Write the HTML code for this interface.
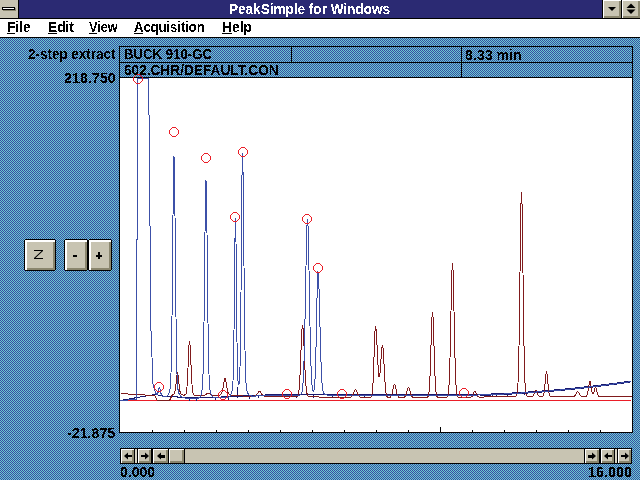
<!DOCTYPE html>
<html><head><meta charset="utf-8">
<style>
html,body{margin:0;padding:0;width:640px;height:480px;overflow:hidden;background:#5086bc;}
*{box-sizing:border-box;}
.abs{position:absolute;}
body{font-family:"Liberation Sans",sans-serif;font-weight:bold;font-size:13.5px;color:#000;position:relative;}
.t{position:absolute;white-space:nowrap;line-height:1;}
.u{text-decoration:underline;text-underline-offset:1px;text-decoration-thickness:1px;}
.t{font-size:14px;transform-origin:0 0;}
</style></head><body>
<svg class="abs" style="left:0;top:0" width="640" height="480" shape-rendering="crispEdges">
<defs><pattern id="chk" width="2" height="2" patternUnits="userSpaceOnUse">
<rect width="2" height="2" fill="#6acece"/><rect x="0" y="0" width="1" height="1" fill="#3a4aa4"/><rect x="1" y="1" width="1" height="1" fill="#3a4aa4"/>
</pattern></defs>
<rect x="0" y="38" width="640" height="442" fill="url(#chk)"/>
<!-- title bar -->
<rect x="0" y="0" width="640" height="18" fill="#2b2a73"/>
<rect x="0" y="18" width="640" height="1" fill="#000"/>
<rect x="0" y="19" width="640" height="18" fill="#fff"/>
<rect x="0" y="37" width="640" height="1" fill="#000"/>
<!-- system box -->
<rect x="0" y="0" width="18" height="18" fill="#c8c4b2"/>
<rect x="18" y="0" width="1" height="18" fill="#000"/>
<rect x="3" y="8" width="13" height="3" fill="#8a866e"/>
<rect x="2" y="7" width="13" height="3" fill="#000"/>
<rect x="3" y="8" width="11" height="1" fill="#fff"/>
<!-- min / max buttons -->
<rect x="602" y="0" width="1" height="18" fill="#000"/>
<rect x="603" y="0" width="18" height="18" fill="#fff"/>
<rect x="604" y="1" width="17" height="17" fill="#8a866e"/>
<rect x="604" y="1" width="15" height="15" fill="#c8c4b2"/>
<rect x="621" y="0" width="1" height="18" fill="#000"/>
<rect x="622" y="0" width="18" height="18" fill="#fff"/>
<rect x="623" y="1" width="17" height="17" fill="#8a866e"/>
<rect x="623" y="1" width="15" height="15" fill="#c8c4b2"/>
<polygon points="608,7 616,7 612,11" fill="#000" shape-rendering="auto"/>
<polygon points="631,3.5 635.5,8 626.5,8" fill="#000" shape-rendering="auto"/>
<polygon points="626.5,9.5 635.5,9.5 631,14" fill="#000" shape-rendering="auto"/>
<!-- header box -->
<rect x="119" y="46" width="514" height="1" fill="#000"/>
<rect x="119" y="62" width="514" height="1" fill="#000"/>
<rect x="119" y="77" width="514" height="1" fill="#000"/>
<rect x="119" y="46" width="1" height="387" fill="#000"/>
<rect x="632" y="46" width="1" height="387" fill="#000"/>
<rect x="291" y="46" width="1" height="17" fill="#000"/>
<rect x="461" y="46" width="1" height="32" fill="#000"/>
<!-- plot -->
<rect x="120" y="78" width="512" height="354" fill="#fff"/>
<rect x="119" y="432" width="514" height="1" fill="#000"/>
<rect x="152" y="430" width="1" height="2" fill="#000"/>
<rect x="184" y="430" width="1" height="2" fill="#000"/>
<rect x="216" y="430" width="1" height="2" fill="#000"/>
<rect x="248" y="430" width="1" height="2" fill="#000"/>
<rect x="280" y="430" width="1" height="2" fill="#000"/>
<rect x="312" y="430" width="1" height="2" fill="#000"/>
<rect x="344" y="430" width="1" height="2" fill="#000"/>
<rect x="376" y="430" width="1" height="2" fill="#000"/>
<rect x="408" y="430" width="1" height="2" fill="#000"/>
<rect x="440" y="427" width="1" height="5" fill="#000"/>
<rect x="472" y="430" width="1" height="2" fill="#000"/>
<rect x="504" y="430" width="1" height="2" fill="#000"/>
<rect x="536" y="430" width="1" height="2" fill="#000"/>
<rect x="568" y="430" width="1" height="2" fill="#000"/>
<rect x="600" y="430" width="1" height="2" fill="#000"/>
<!-- Z - + buttons -->
<rect x="25" y="239" width="30" height="1" fill="#000"/>
<rect x="25" y="270" width="30" height="1" fill="#000"/>
<rect x="24" y="240" width="1" height="30" fill="#000"/>
<rect x="55" y="240" width="1" height="30" fill="#000"/>
<rect x="25" y="240" width="30" height="30" fill="#fff"/>
<rect x="27" y="242" width="28" height="28" fill="#8a866e"/>
<rect x="27" y="242" width="26" height="26" fill="#c8c4b2"/>
<rect x="65" y="239" width="22" height="1" fill="#000"/>
<rect x="65" y="270" width="22" height="1" fill="#000"/>
<rect x="64" y="240" width="1" height="30" fill="#000"/>
<rect x="87" y="240" width="1" height="30" fill="#000"/>
<rect x="65" y="240" width="22" height="30" fill="#fff"/>
<rect x="67" y="242" width="20" height="28" fill="#8a866e"/>
<rect x="67" y="242" width="18" height="26" fill="#c8c4b2"/>
<rect x="89" y="239" width="22" height="1" fill="#000"/>
<rect x="89" y="270" width="22" height="1" fill="#000"/>
<rect x="88" y="240" width="1" height="30" fill="#000"/>
<rect x="111" y="240" width="1" height="30" fill="#000"/>
<rect x="89" y="240" width="22" height="30" fill="#fff"/>
<rect x="91" y="242" width="20" height="28" fill="#8a866e"/>
<rect x="91" y="242" width="18" height="26" fill="#c8c4b2"/>
<polygon points="34,250 43,250 43,251 35.5,258 43,258 43,259 34,259 34,258 41.5,251 34,251" fill="#000" shape-rendering="auto"/>
<rect x="73" y="255" width="4" height="2" fill="#000"/>
<rect x="96" y="255" width="6" height="2" fill="#000"/><rect x="98" y="252" width="2" height="7" fill="#000"/>
<!-- scrollbar -->
<rect x="120" y="448" width="512" height="16" fill="#000"/>
<rect x="185" y="449" width="399" height="14" fill="#c8c4b2"/>
<rect x="135" y="449" width="2" height="14" fill="#d8d4c4"/>
<rect x="615" y="449" width="2" height="14" fill="#d8d4c4"/>
<rect x="121" y="449" width="13" height="14" fill="#fff"/><rect x="122" y="450" width="12" height="13" fill="#8a866e"/><rect x="122" y="450" width="10" height="11" fill="#c8c4b2"/>
<rect x="138" y="449" width="13" height="14" fill="#fff"/><rect x="139" y="450" width="12" height="13" fill="#8a866e"/><rect x="139" y="450" width="10" height="11" fill="#c8c4b2"/>
<rect x="153" y="449" width="15" height="14" fill="#fff"/><rect x="154" y="450" width="14" height="13" fill="#8a866e"/><rect x="154" y="450" width="12" height="11" fill="#c8c4b2"/>
<rect x="169" y="449" width="15" height="14" fill="#fff"/><rect x="170" y="450" width="14" height="13" fill="#8a866e"/><rect x="170" y="450" width="12" height="11" fill="#c8c4b2"/>
<rect x="585" y="449" width="14" height="14" fill="#fff"/><rect x="586" y="450" width="13" height="13" fill="#8a866e"/><rect x="586" y="450" width="11" height="11" fill="#c8c4b2"/>
<rect x="601" y="449" width="13" height="14" fill="#fff"/><rect x="602" y="450" width="12" height="13" fill="#8a866e"/><rect x="602" y="450" width="10" height="11" fill="#c8c4b2"/>
<rect x="618" y="449" width="13" height="14" fill="#fff"/><rect x="619" y="450" width="12" height="13" fill="#8a866e"/><rect x="619" y="450" width="10" height="11" fill="#c8c4b2"/>
<polygon points="124,456 128,452.5 128,459.5" fill="#000" shape-rendering="auto"/><rect x="127" y="455" width="5" height="2" fill="#000"/>
<polygon points="149,456 145,452.5 145,459.5" fill="#000" shape-rendering="auto"/><rect x="141" y="455" width="5" height="2" fill="#000"/>
<polygon points="157,456 161,452.5 161,459.5" fill="#000" shape-rendering="auto"/><rect x="160" y="455" width="5" height="3" fill="#000"/>
<polygon points="596,456 592,452.5 592,459.5" fill="#000" shape-rendering="auto"/><rect x="588" y="455" width="5" height="3" fill="#000"/>
<polygon points="604,456 608,452.5 608,459.5" fill="#000" shape-rendering="auto"/><rect x="607" y="455" width="5" height="2" fill="#000"/>
<polygon points="629,456 625,452.5 625,459.5" fill="#000" shape-rendering="auto"/><rect x="621" y="455" width="5" height="2" fill="#000"/>
</svg>
<svg class="abs" style="left:0;top:0" width="640" height="480">
<defs><clipPath id="pc"><rect x="120" y="78" width="512" height="354"/></clipPath></defs>
<g clip-path="url(#pc)" fill="none" stroke-width="1" stroke-linejoin="miter" shape-rendering="crispEdges">
<path d="M120 400.5 H631" stroke="#eb1e28" shape-rendering="crispEdges"/>
<path d="M120 400.50 L125 399.64 L130 398.79 L135 397.93 L140 397.07 L145 396.21 L150 395.36 L155 394.50 L160 395.41 L165 396.32 L170 396.68 L175 396.90 L180 397.12 L185 397.34 L190 397.56 L195 397.78 L200 398.00 L205 397.77 L210 397.53 L215 397.30 L220 397.06 L225 396.83 L230 396.59 L235 396.36 L240 396.14 L245 395.91 L250 395.68 L255 395.45 L260 395.23 L265 395.00 L270 394.97 L275 394.94 L280 394.91 L285 394.88 L290 394.85 L295 394.82 L300 394.79 L305 394.76 L310 394.74 L315 394.71 L320 394.68 L325 394.65 L330 394.62 L335 394.59 L340 394.56 L345 394.53 L350 394.50 L355 394.53 L360 394.56 L365 394.58 L370 394.61 L375 394.64 L380 394.67 L385 394.69 L390 394.72 L395 394.75 L400 394.78 L405 394.81 L410 394.83 L415 394.86 L420 394.89 L425 394.92 L430 394.94 L435 394.97 L440 395.00 L450 394.96 L460 394.85 L470 394.65 L480 394.39 L490 394.04 L500 393.62 L510 393.12 L520 392.54 L530 391.89 L540 391.16 L550 390.35 L560 389.47 L570 388.51 L580 387.47 L590 386.36 L600 385.17 L610 383.90 L620 382.56 L630 381.14" stroke="#1a1a6e"/>
<path d="M480 395.39 L490 395.04 L500 394.62 L510 394.12 L520 393.54 L530 392.89 L540 392.16 L550 391.35 L560 390.47 L570 389.51 L580 388.47 L590 387.36 L600 386.17 L610 384.90 L620 383.56 L630 382.14" stroke="#1a1a6e"/>
<path d="M189.5 397.0 V400.5" stroke="#1a1a6e"/><path d="M196.5 397.3 V400.8" stroke="#1a1a6e"/><path d="M215.5 396.8 V400.3" stroke="#1a1a6e"/><path d="M228.5 396.2 V399.7" stroke="#1a1a6e"/><path d="M249.5 395.2 V398.7" stroke="#1a1a6e"/><path d="M258.5 394.8 V398.3" stroke="#1a1a6e"/><path d="M296.5 394.3 V397.8" stroke="#1a1a6e"/><path d="M313.5 394.2 V397.7" stroke="#1a1a6e"/><path d="M332.5 394.1 V397.6" stroke="#1a1a6e"/><path d="M364.5 394.1 V397.6" stroke="#1a1a6e"/><path d="M492.5 393.5 V397.0" stroke="#1a1a6e"/><path d="M496.5 393.3 V396.8" stroke="#1a1a6e"/><path d="M507.5 392.8 V396.3" stroke="#1a1a6e"/><path d="M524.5 391.8 V395.3" stroke="#1a1a6e"/><path d="M237.5 387 V398" stroke="#1a1a6e"/>
<path d="M120.5 393.5 L121.0 393.5 L121.5 393.6 L122.0 393.6 L122.5 393.6 L123.0 393.7 L123.5 393.7 L124.0 393.7 L124.5 393.8 L125.0 393.8 L125.5 393.8 L126.0 393.8 L126.5 393.9 L127.0 393.9 L127.5 393.9 L128.0 394.0 L128.5 394.0 L129.0 394.0 L129.5 394.1 L130.0 394.1 L130.5 394.1 L131.0 394.2 L131.5 394.2 L132.0 394.2 L132.5 394.2 L133.0 394.3 L133.5 394.3 L134.0 394.3 L134.5 394.4 L135.0 394.4 L135.5 394.4 L136.0 394.5 L136.5 394.5 L137.0 394.5 L137.5 394.6 L138.0 394.6 L138.5 394.6 L139.0 394.6 L139.5 394.7 L140.0 394.7 L140.5 394.7 L141.0 394.8 L141.5 394.8 L142.0 394.8 L142.5 394.8 L143.0 394.9 L143.5 394.9 L144.0 394.9 L144.5 394.9 L145.0 395.0 L145.5 395.0 L146.0 395.0 L146.5 395.1 L147.0 395.1 L147.5 395.1 L148.0 395.1 L148.5 395.2 L149.0 395.2 L149.5 395.2 L150.0 395.2 L150.5 395.3 L151.0 395.3 L151.5 395.3 L152.0 395.4 L152.5 395.4 L153.0 395.4 L153.5 395.4 L154.0 395.5 L154.5 395.5 L155.0 396.3 L155.5 397.2 L156.0 398.0 L156.5 398.8 L157.0 399.7 L157.5 400.5 L158.0 400.5 L158.5 400.5 L159.0 400.5 L159.5 400.5 L160.0 400.5 L160.5 400.5 L161.0 400.5 L161.5 400.5 L162.0 400.5 L162.5 400.5 L163.0 400.5 L163.5 400.5 L164.0 400.5 L164.5 400.5 L165.0 400.5 L165.5 400.5 L166.0 400.5 L166.5 400.5 L167.0 400.5 L167.5 400.5 L168.0 400.5 L168.5 400.5 L169.0 400.5 L169.5 400.5 L170.0 399.5 L170.5 398.5 L171.0 397.5 L171.5 396.5 L172.0 395.5 L172.5 394.5 L173.0 394.5 L173.5 394.4 L174.0 394.0 L174.5 393.1 L175.0 391.3 L175.5 388.1 L176.0 383.7 L176.5 378.9 L177.0 375.0 L177.5 373.5 L178.0 375.0 L178.5 379.0 L179.0 383.9 L179.5 388.3 L180.0 391.5 L180.5 393.4 L181.0 394.3 L181.5 394.7 L182.0 394.9 L182.5 394.9 L183.0 395.0 L183.5 395.0 L184.0 395.0 L184.5 395.0 L185.0 394.9 L185.5 394.6 L186.0 393.7 L186.5 391.4 L187.0 386.7 L187.5 378.7 L188.0 367.6 L188.5 355.2 L189.0 345.3 L189.5 341.5 L190.0 344.8 L190.5 353.6 L191.0 365.0 L191.5 376.0 L192.0 384.4 L192.5 390.0 L193.0 393.0 L193.5 394.5 L194.0 395.1 L194.5 395.4 L195.0 395.5 L195.5 395.5 L196.0 395.5 L196.5 395.5 L197.0 395.5 L197.5 395.5 L198.0 395.5 L198.5 395.5 L199.0 395.5 L199.5 395.5 L200.0 395.5 L200.5 395.5 L201.0 395.6 L201.5 395.6 L202.0 395.6 L202.5 395.6 L203.0 395.5 L203.5 395.5 L204.0 395.4 L204.5 395.3 L205.0 395.1 L205.5 394.7 L206.0 394.3 L206.5 393.9 L207.0 393.6 L207.5 393.5 L208.0 393.5 L208.5 393.6 L209.0 393.8 L209.5 393.9 L210.0 394.1 L210.5 394.4 L211.0 394.6 L211.5 394.8 L212.0 395.0 L212.5 395.1 L213.0 395.3 L213.5 395.4 L214.0 395.5 L214.5 395.5 L215.0 395.6 L215.5 395.6 L216.0 395.6 L216.5 395.7 L217.0 395.7 L217.5 395.6 L218.0 395.6 L218.5 395.5 L219.0 395.4 L219.5 395.3 L220.0 395.0 L220.5 394.7 L221.0 394.2 L221.5 393.5 L222.0 392.4 L222.5 390.7 L223.0 388.3 L223.5 385.2 L224.0 382.0 L224.5 379.5 L225.0 378.5 L225.5 379.5 L226.0 382.0 L226.5 385.2 L227.0 388.3 L227.5 390.8 L228.0 392.4 L228.5 393.5 L229.0 394.3 L229.5 394.8 L230.0 395.1 L230.5 395.4 L231.0 395.5 L231.5 395.7 L232.0 395.7 L232.5 395.8 L233.0 395.8 L233.5 395.8 L234.0 395.9 L234.5 395.9 L235.0 395.9 L235.5 395.9 L236.0 395.9 L236.5 395.9 L237.0 395.9 L237.5 395.9 L238.0 395.9 L238.5 395.9 L239.0 395.9 L239.5 395.9 L240.0 395.9 L240.5 395.9 L241.0 395.9 L241.5 395.9 L242.0 395.9 L242.5 395.9 L243.0 396.0 L243.5 396.0 L244.0 396.0 L244.5 396.0 L245.0 396.0 L245.5 396.0 L246.0 396.0 L246.5 396.0 L247.0 396.0 L247.5 396.0 L248.0 396.0 L248.5 396.0 L249.0 396.0 L249.5 396.0 L250.0 396.0 L250.5 396.0 L251.0 396.0 L251.5 396.0 L252.0 396.0 L252.5 396.0 L253.0 396.0 L253.5 396.0 L254.0 396.0 L254.5 396.0 L255.0 395.9 L255.5 395.7 L256.0 395.4 L256.5 394.9 L257.0 394.3 L257.5 393.6 L258.0 392.8 L258.5 392.1 L259.0 391.7 L259.5 391.5 L260.0 391.7 L260.5 392.2 L261.0 392.9 L261.5 393.6 L262.0 394.4 L262.5 395.0 L263.0 395.4 L263.5 395.8 L264.0 395.9 L264.5 396.1 L265.0 396.1 L265.5 396.1 L266.0 396.2 L266.5 396.2 L267.0 396.2 L267.5 396.2 L268.0 396.2 L268.5 396.2 L269.0 396.2 L269.5 396.2 L270.0 396.2 L270.5 396.2 L271.0 396.2 L271.5 396.2 L272.0 396.2 L272.5 396.2 L273.0 396.2 L273.5 396.2 L274.0 396.2 L274.5 396.3 L275.0 396.3 L275.5 396.3 L276.0 396.3 L276.5 396.3 L277.0 396.3 L277.5 396.3 L278.0 396.3 L278.5 396.3 L279.0 396.3 L279.5 396.3 L280.0 396.3 L280.5 396.3 L281.0 396.3 L281.5 396.3 L282.0 396.3 L282.5 396.3 L283.0 396.3 L283.5 396.3 L284.0 396.3 L284.5 396.3 L285.0 396.4 L285.5 396.4 L286.0 396.4 L286.5 396.4 L287.0 396.4 L287.5 396.4 L288.0 396.4 L288.5 396.4 L289.0 396.4 L289.5 396.4 L290.0 396.4 L290.5 396.4 L291.0 396.4 L291.5 396.4 L292.0 396.4 L292.5 396.4 L293.0 396.4 L293.5 396.4 L294.0 396.4 L294.5 396.4 L295.0 396.4 L295.5 396.4 L296.0 396.4 L296.5 396.4 L297.0 396.3 L297.5 395.9 L298.0 395.1 L298.5 393.4 L299.0 390.0 L299.5 384.2 L300.0 375.5 L300.5 364.0 L301.0 350.7 L301.5 338.1 L302.0 328.9 L302.5 325.5 L303.0 328.2 L303.5 335.7 L304.0 346.4 L304.5 358.3 L305.0 369.5 L305.5 378.9 L306.0 385.9 L306.5 390.6 L307.0 393.5 L307.5 395.2 L308.0 396.0 L308.5 396.4 L309.0 396.6 L309.5 396.7 L310.0 396.7 L310.5 396.7 L311.0 396.8 L311.5 396.8 L312.0 396.8 L312.5 396.8 L313.0 396.8 L313.5 396.8 L314.0 396.8 L314.5 396.9 L315.0 396.9 L315.5 396.9 L316.0 396.9 L316.5 396.9 L317.0 396.9 L317.5 396.9 L318.0 396.9 L318.5 396.9 L319.0 397.0 L319.5 397.0 L320.0 397.0 L320.5 397.0 L321.0 397.0 L321.5 397.0 L322.0 397.0 L322.5 397.1 L323.0 397.1 L323.5 397.1 L324.0 397.1 L324.5 397.1 L325.0 397.1 L325.5 397.1 L326.0 397.1 L326.5 397.1 L327.0 397.2 L327.5 397.2 L328.0 397.2 L328.5 397.2 L329.0 397.2 L329.5 397.2 L330.0 397.2 L330.5 397.2 L331.0 397.3 L331.5 397.3 L332.0 397.3 L332.5 397.3 L333.0 397.3 L333.5 397.3 L334.0 397.3 L334.5 397.4 L335.0 397.4 L335.5 397.4 L336.0 397.4 L336.5 397.4 L337.0 397.4 L337.5 397.4 L338.0 397.4 L338.5 397.4 L339.0 397.5 L339.5 397.5 L340.0 397.5 L340.5 397.5 L341.0 397.5 L341.5 397.5 L342.0 397.5 L342.5 397.5 L343.0 397.5 L343.5 397.5 L344.0 397.5 L344.5 397.5 L345.0 397.5 L345.5 397.5 L346.0 397.5 L346.5 397.5 L347.0 397.5 L347.5 397.5 L348.0 397.5 L348.5 397.5 L349.0 397.5 L349.5 397.5 L350.0 397.4 L350.5 397.3 L351.0 397.1 L351.5 396.8 L352.0 396.3 L352.5 395.5 L353.0 394.5 L353.5 393.2 L354.0 391.8 L354.5 390.6 L355.0 389.8 L355.5 389.5 L356.0 389.8 L356.5 390.6 L357.0 391.8 L357.5 393.2 L358.0 394.5 L358.5 395.5 L359.0 396.3 L359.5 396.8 L360.0 397.1 L360.5 397.3 L361.0 397.4 L361.5 397.5 L362.0 397.5 L362.5 397.5 L363.0 397.5 L363.5 397.5 L364.0 397.5 L364.5 397.5 L365.0 397.5 L365.5 397.5 L366.0 397.5 L366.5 397.5 L367.0 397.5 L367.5 397.5 L368.0 397.5 L368.5 397.5 L369.0 397.5 L369.5 397.5 L370.0 397.5 L370.5 397.4 L371.0 397.1 L371.5 396.3 L372.0 394.4 L372.5 390.4 L373.0 383.1 L373.5 371.9 L374.0 357.5 L374.5 342.5 L375.0 330.9 L375.5 326.5 L376.0 328.8 L376.5 335.5 L377.0 345.0 L377.5 355.6 L378.0 365.3 L378.5 372.7 L379.0 376.6 L379.5 376.8 L380.0 373.4 L380.5 367.2 L381.0 359.7 L381.5 352.5 L382.0 347.3 L382.5 345.4 L383.0 347.9 L383.5 354.7 L384.0 364.0 L384.5 373.7 L385.0 382.2 L385.5 388.5 L386.0 392.7 L386.5 395.2 L387.0 396.5 L387.5 397.1 L388.0 397.4 L388.5 397.4 L389.0 397.5 L389.5 397.4 L390.0 397.3 L390.5 396.9 L391.0 396.3 L391.5 395.3 L392.0 393.7 L392.5 391.5 L393.0 389.1 L393.5 386.8 L394.0 385.1 L394.5 384.5 L395.0 385.1 L395.5 386.8 L396.0 389.1 L396.5 391.5 L397.0 393.7 L397.5 395.3 L398.0 396.3 L398.5 396.9 L399.0 397.3 L399.5 397.4 L400.0 397.5 L400.5 397.5 L401.0 397.5 L401.5 397.5 L402.0 397.5 L402.5 397.5 L403.0 397.5 L403.5 397.4 L404.0 397.3 L404.5 397.1 L405.0 396.6 L405.5 395.8 L406.0 394.5 L406.5 392.9 L407.0 391.1 L407.5 389.3 L408.0 388.0 L408.5 387.5 L409.0 388.0 L409.5 389.3 L410.0 391.1 L410.5 392.9 L411.0 394.5 L411.5 395.8 L412.0 396.6 L412.5 397.1 L413.0 397.3 L413.5 397.4 L414.0 397.5 L414.5 397.5 L415.0 397.5 L415.5 397.5 L416.0 397.5 L416.5 397.5 L417.0 397.5 L417.5 397.5 L418.0 397.5 L418.5 397.5 L419.0 397.5 L419.5 397.5 L420.0 397.5 L420.5 397.5 L421.0 397.5 L421.5 397.5 L422.0 397.5 L422.5 397.5 L423.0 397.5 L423.5 397.5 L424.0 397.5 L424.5 397.5 L425.0 397.5 L425.5 397.5 L426.0 397.4 L426.5 397.4 L427.0 397.3 L427.5 397.1 L428.0 396.5 L428.5 395.0 L429.0 391.8 L429.5 385.9 L430.0 376.3 L430.5 362.5 L431.0 345.9 L431.5 329.4 L432.0 317.1 L432.5 312.5 L433.0 317.1 L433.5 329.4 L434.0 345.9 L434.5 362.5 L435.0 376.2 L435.5 385.9 L436.0 391.8 L436.5 394.9 L437.0 396.4 L437.5 397.0 L438.0 397.3 L438.5 397.3 L439.0 397.3 L439.5 397.3 L440.0 397.3 L440.5 397.3 L441.0 397.3 L441.5 397.3 L442.0 397.3 L442.5 397.3 L443.0 397.3 L443.5 397.3 L444.0 397.3 L444.5 397.3 L445.0 397.3 L445.5 397.3 L446.0 397.3 L446.5 397.2 L447.0 396.9 L447.5 396.3 L448.0 394.7 L448.5 391.4 L449.0 385.0 L449.5 374.2 L450.0 357.8 L450.5 336.0 L451.0 311.1 L451.5 287.2 L452.0 269.9 L452.5 263.5 L453.0 269.9 L453.5 287.2 L454.0 311.0 L454.5 336.0 L455.0 357.8 L455.5 374.1 L456.0 385.0 L456.5 391.3 L457.0 394.6 L457.5 396.2 L458.0 396.8 L458.5 397.1 L459.0 397.1 L459.5 397.2 L460.0 397.2 L460.5 397.2 L461.0 397.2 L461.5 397.2 L462.0 397.2 L462.5 397.1 L463.0 397.1 L463.5 397.1 L464.0 397.1 L464.5 397.1 L465.0 397.1 L465.5 397.1 L466.0 397.1 L466.5 397.1 L467.0 397.1 L467.5 397.1 L468.0 397.1 L468.5 397.1 L469.0 397.1 L469.5 397.1 L470.0 397.1 L470.5 397.1 L471.0 397.0 L471.5 396.8 L472.0 396.5 L472.5 395.8 L473.0 394.8 L473.5 393.5 L474.0 392.2 L474.5 391.4 L475.0 391.3 L475.5 392.0 L476.0 393.2 L476.5 394.5 L477.0 395.6 L477.5 396.3 L478.0 396.7 L478.5 396.9 L479.0 397.0 L479.5 397.0 L480.0 397.0 L480.5 397.0 L481.0 397.0 L481.5 397.0 L482.0 397.0 L482.5 397.0 L483.0 397.0 L483.5 397.0 L484.0 397.0 L484.5 396.9 L485.0 396.9 L485.5 396.9 L486.0 396.9 L486.5 396.9 L487.0 396.9 L487.5 396.9 L488.0 396.9 L488.5 396.9 L489.0 396.9 L489.5 396.9 L490.0 396.9 L490.5 396.9 L491.0 396.9 L491.5 396.9 L492.0 396.9 L492.5 396.9 L493.0 396.8 L493.5 396.8 L494.0 396.8 L494.5 396.8 L495.0 396.8 L495.5 396.8 L496.0 396.8 L496.5 396.8 L497.0 396.8 L497.5 396.8 L498.0 396.8 L498.5 396.8 L499.0 396.8 L499.5 396.8 L500.0 396.8 L500.5 396.8 L501.0 396.7 L501.5 396.7 L502.0 396.7 L502.5 396.7 L503.0 396.7 L503.5 396.7 L504.0 396.7 L504.5 396.7 L505.0 396.7 L505.5 396.7 L506.0 396.7 L506.5 396.7 L507.0 396.7 L507.5 396.7 L508.0 396.7 L508.5 396.6 L509.0 396.6 L509.5 396.6 L510.0 396.6 L510.5 396.6 L511.0 396.6 L511.5 396.6 L512.0 396.6 L512.5 396.6 L513.0 396.6 L513.5 396.6 L514.0 396.6 L514.5 396.6 L515.0 396.6 L515.5 396.5 L516.0 396.3 L516.5 395.8 L517.0 394.3 L517.5 390.7 L518.0 383.1 L518.5 368.9 L519.0 345.7 L519.5 312.6 L520.0 272.8 L520.5 233.1 L521.0 203.5 L521.5 192.5 L522.0 203.5 L522.5 233.1 L523.0 272.8 L523.5 312.6 L524.0 345.6 L524.5 368.9 L525.0 383.1 L525.5 390.7 L526.0 394.2 L526.5 395.7 L527.0 396.3 L527.5 396.4 L528.0 396.5 L528.5 396.5 L529.0 396.5 L529.5 396.5 L530.0 396.5 L530.5 396.5 L531.0 396.5 L531.5 396.5 L532.0 396.4 L532.5 396.3 L533.0 396.0 L533.5 395.3 L534.0 394.2 L534.5 392.8 L535.0 391.3 L535.5 390.2 L536.0 389.9 L536.5 390.6 L537.0 391.9 L537.5 393.4 L538.0 394.7 L538.5 395.6 L539.0 396.1 L539.5 396.4 L540.0 396.5 L540.5 396.5 L541.0 396.5 L541.5 396.5 L542.0 396.4 L542.5 396.3 L543.0 395.9 L543.5 394.8 L544.0 392.7 L544.5 389.2 L545.0 384.2 L545.5 378.6 L546.0 374.2 L546.5 372.5 L547.0 374.2 L547.5 378.6 L548.0 384.2 L548.5 389.2 L549.0 392.7 L549.5 394.8 L550.0 395.9 L550.5 396.3 L551.0 396.4 L551.5 396.5 L552.0 396.5 L552.5 396.5 L553.0 396.5 L553.5 396.5 L554.0 396.5 L554.5 396.5 L555.0 396.5 L555.5 396.5 L556.0 396.5 L556.5 396.5 L557.0 396.5 L557.5 396.5 L558.0 396.5 L558.5 396.5 L559.0 396.5 L559.5 396.5 L560.0 396.5 L560.5 396.5 L561.0 396.5 L561.5 396.5 L562.0 396.5 L562.5 396.5 L563.0 396.5 L563.5 396.5 L564.0 396.5 L564.5 396.5 L565.0 396.5 L565.5 396.5 L566.0 396.5 L566.5 396.5 L567.0 396.5 L567.5 396.5 L568.0 396.5 L568.5 396.5 L569.0 396.5 L569.5 396.5 L570.0 396.5 L570.5 396.5 L571.0 396.5 L571.5 396.5 L572.0 396.5 L572.5 396.5 L573.0 396.5 L573.5 396.4 L574.0 396.3 L574.5 396.0 L575.0 395.6 L575.5 394.9 L576.0 394.0 L576.5 393.1 L577.0 392.3 L577.5 391.8 L578.0 391.9 L578.5 392.4 L579.0 393.3 L579.5 394.2 L580.0 395.0 L580.5 395.7 L581.0 396.1 L581.5 396.3 L582.0 396.4 L582.5 396.5 L583.0 396.5 L583.5 396.5 L584.0 396.5 L584.5 396.5 L585.0 396.5 L585.5 396.5 L586.0 396.3 L586.5 396.0 L587.0 395.3 L587.5 393.8 L588.0 391.3 L588.5 388.1 L589.0 384.7 L589.5 382.2 L590.0 381.5 L590.5 383.0 L591.0 386.0 L591.5 389.4 L592.0 392.2 L592.5 393.8 L593.0 394.2 L593.5 393.4 L594.0 391.8 L594.5 389.8 L595.0 388.1 L595.5 387.5 L596.0 388.1 L596.5 389.8 L597.0 391.9 L597.5 393.7 L598.0 395.1 L598.5 395.9 L599.0 396.3 L599.5 396.4 L600.0 396.5 L600.5 396.5 L601.0 396.5 L601.5 396.5 L602.0 396.5 L602.5 396.5 L603.0 396.5 L603.5 396.5 L604.0 396.5 L604.5 396.5 L605.0 396.5 L605.5 396.5 L606.0 396.5 L606.5 396.5 L607.0 396.5 L607.5 396.5 L608.0 396.5 L608.5 396.5 L609.0 396.5 L609.5 396.5 L610.0 396.5 L610.5 396.5 L611.0 396.5 L611.5 396.5 L612.0 396.5 L612.5 396.5 L613.0 396.5 L613.5 396.5 L614.0 396.5 L614.5 396.5 L615.0 396.5 L615.5 396.5 L616.0 396.5 L616.5 396.5 L617.0 396.5 L617.5 396.5 L618.0 396.5 L618.5 396.5 L619.0 396.5 L619.5 396.5 L620.0 396.5 L620.5 396.5 L621.0 396.5 L621.5 396.5 L622.0 396.5 L622.5 396.5 L623.0 396.5 L623.5 396.5 L624.0 396.5 L624.5 396.5 L625.0 396.5 L625.5 396.5 L626.0 396.5 L626.5 396.5 L627.0 396.5 L627.5 396.5 L628.0 396.5 L628.5 396.5 L629.0 396.5 L629.5 396.5 L630.0 396.5 L630.5 396.5 L631.0 396.5 L631.5 396.5" stroke="#801a1c"/>
<path d="M120.5 400.5 L136.5 399.5 L136.5 239.5 L137.5 239.5 L137.5 78.5 L148.5 78.5 L148.5 114.5 L149.5 115.5 L149.5 225.5 L150.5 226.5 L150.5 330.5 L151.5 331.5 L152.5 382.5 L155.5 392.5 L156.5 394.7 L157.0 394.6 L157.5 394.0 L158.0 392.6 L158.5 390.4 L159.0 388.3 L159.5 387.5 L160.0 388.6 L160.5 390.9 L161.0 393.4 L161.5 395.0 L162.0 395.9 L162.5 396.3 L163.0 396.4 L163.5 396.5 L164.0 396.6 L164.5 396.7 L165.0 396.6 L165.5 396.6 L166.0 396.5 L166.5 396.3 L167.0 395.9 L167.5 395.4 L168.0 394.8 L168.5 394.0 L169.0 393.1 L169.5 391.7 L170.0 389.3 L170.5 384.2 L171.0 373.3 L171.5 352.2 L172.0 317.2 L172.5 268.9 L173.0 215.6 L173.5 172.9 L174.0 156.5 L174.5 173.0 L175.0 215.7 L175.5 269.0 L176.0 317.4 L176.5 352.4 L177.0 373.5 L177.5 384.4 L178.0 389.5 L178.5 392.0 L179.0 393.4 L179.5 394.3 L180.0 395.1 L180.5 395.8 L181.0 396.3 L181.5 396.7 L182.0 397.1 L182.5 397.3 L183.0 397.5 L183.5 397.7 L184.0 397.8 L184.5 397.9 L185.0 398.0 L185.5 398.0 L186.0 398.0 L186.5 398.1 L187.0 398.1 L187.5 398.1 L188.0 398.1 L188.5 398.1 L189.0 398.2 L189.5 398.2 L190.0 398.2 L190.5 398.2 L191.0 398.2 L191.5 398.2 L192.0 398.2 L192.5 398.3 L193.0 398.3 L193.5 398.3 L194.0 398.3 L194.5 398.3 L195.0 398.3 L195.5 398.3 L196.0 398.3 L196.5 398.3 L197.0 398.3 L197.5 398.2 L198.0 398.1 L198.5 398.0 L199.0 397.7 L199.5 397.3 L200.0 396.7 L200.5 395.9 L201.0 394.8 L201.5 393.2 L202.0 390.4 L202.5 385.1 L203.0 374.6 L203.5 355.1 L204.0 323.5 L204.5 280.3 L205.0 232.9 L205.5 195.1 L206.0 180.5 L206.5 195.0 L207.0 232.8 L207.5 280.1 L208.0 323.3 L208.5 354.9 L209.0 374.3 L209.5 384.8 L210.0 390.0 L210.5 392.7 L211.0 394.3 L211.5 395.4 L212.0 396.2 L212.5 396.8 L213.0 397.1 L213.5 397.4 L214.0 397.6 L214.5 397.7 L215.0 397.7 L215.5 397.7 L216.0 397.7 L216.5 397.7 L217.0 397.7 L217.5 397.7 L218.0 397.7 L218.5 397.7 L219.0 397.6 L219.5 397.6 L220.0 397.6 L220.5 397.6 L221.0 397.5 L221.5 397.5 L222.0 397.5 L222.5 397.5 L223.0 397.4 L223.5 397.4 L224.0 397.4 L224.5 397.4 L225.0 397.4 L225.5 397.3 L226.0 397.3 L226.5 397.3 L227.0 397.2 L227.5 397.2 L228.0 397.2 L228.5 397.1 L229.0 396.9 L229.5 396.6 L230.0 396.1 L230.5 395.4 L231.0 394.4 L231.5 393.1 L232.0 391.2 L232.5 388.0 L233.0 380.9 L233.5 364.1 L234.0 331.5 L234.5 284.1 L235.0 238.0 L235.5 218.3 L236.0 241.7 L236.5 294.0 L237.0 342.1 L237.5 369.9 L238.0 381.1 L238.5 384.2 L239.0 383.8 L239.5 379.6 L240.0 367.3 L240.5 340.1 L241.0 293.0 L241.5 231.3 L242.0 176.0 L242.5 153.4 L243.0 169.9 L243.5 212.7 L244.0 266.2 L244.5 314.8 L245.0 350.2 L245.5 371.6 L246.0 382.9 L246.5 388.4 L247.0 391.0 L247.5 392.5 L248.0 393.5 L248.5 394.3 L249.0 394.9 L249.5 395.3 L250.0 395.6 L250.5 395.8 L251.0 395.9 L251.5 396.0 L252.0 396.0 L252.5 396.0 L253.0 396.0 L253.5 396.0 L254.0 396.0 L254.5 396.0 L255.0 396.0 L255.5 396.0 L256.0 395.9 L256.5 395.9 L257.0 395.9 L257.5 395.9 L258.0 395.8 L258.5 395.8 L259.0 395.8 L259.5 395.8 L260.0 395.7 L260.5 395.7 L261.0 395.7 L261.5 395.7 L262.0 395.7 L262.5 395.6 L263.0 395.6 L263.5 395.6 L264.0 395.6 L264.5 395.5 L265.0 395.5 L265.5 395.5 L266.0 395.5 L266.5 395.5 L267.0 395.5 L267.5 395.5 L268.0 395.5 L268.5 395.5 L269.0 395.5 L269.5 395.5 L270.0 395.5 L270.5 395.5 L271.0 395.5 L271.5 395.5 L272.0 395.5 L272.5 395.5 L273.0 395.5 L273.5 395.5 L274.0 395.4 L274.5 395.4 L275.0 395.4 L275.5 395.4 L276.0 395.4 L276.5 395.4 L277.0 395.4 L277.5 395.4 L278.0 395.4 L278.5 395.4 L279.0 395.4 L279.5 395.4 L280.0 395.4 L280.5 395.4 L281.0 395.4 L281.5 395.4 L282.0 395.4 L282.5 395.4 L283.0 395.4 L283.5 395.4 L284.0 395.4 L284.5 395.4 L285.0 395.4 L285.5 395.4 L286.0 395.4 L286.5 395.4 L287.0 395.4 L287.5 395.4 L288.0 395.4 L288.5 395.4 L289.0 395.4 L289.5 395.4 L290.0 395.4 L290.5 395.4 L291.0 395.3 L291.5 395.3 L292.0 395.3 L292.5 395.3 L293.0 395.3 L293.5 395.3 L294.0 395.3 L294.5 395.3 L295.0 395.3 L295.5 395.3 L296.0 395.3 L296.5 395.3 L297.0 395.3 L297.5 395.3 L298.0 395.3 L298.5 395.2 L299.0 395.2 L299.5 395.1 L300.0 395.0 L300.5 394.8 L301.0 394.3 L301.5 393.4 L302.0 391.7 L302.5 388.6 L303.0 383.2 L303.5 374.5 L304.0 361.4 L304.5 343.1 L305.0 319.8 L305.5 293.1 L306.0 265.8 L306.5 241.8 L307.0 225.3 L307.5 219.4 L308.0 225.9 L308.5 244.0 L309.0 269.9 L309.5 298.8 L310.0 326.2 L310.5 349.0 L311.0 366.1 L311.5 377.7 L312.0 384.9 L312.5 388.8 L313.0 390.7 L313.5 391.0 L314.0 389.9 L314.5 386.6 L315.0 379.6 L315.5 367.1 L316.0 348.1 L316.5 323.7 L317.0 298.4 L317.5 278.9 L318.0 271.5 L318.5 276.0 L319.0 288.7 L319.5 306.8 L320.0 326.9 L320.5 346.1 L321.0 362.1 L321.5 374.2 L322.0 382.5 L322.5 387.8 L323.0 390.9 L323.5 392.6 L324.0 393.6 L324.5 394.1 L325.0 394.4 L325.5 394.6 L326.0 394.8 L326.5 394.9 L327.0 395.0 L327.5 395.0 L328.0 395.0 L328.5 395.1 L329.0 395.1 L329.5 395.1 L330.0 395.1 L330.5 395.1 L331.0 395.1 L331.5 395.1 L332.0 395.1 L332.5 395.1 L333.0 395.1 L333.5 395.1 L334.0 395.1 L334.5 395.1 L335.0 395.1 L335.5 395.1 L336.0 395.1 L336.5 395.1 L337.0 395.1 L337.5 395.1 L338.0 395.1 L338.5 395.1 L339.0 395.1 L339.5 395.1 L340.0 395.1 L340.5 395.1 L341.0 395.1 L341.5 395.1 L342.0 395.1 L342.5 395.0 L343.0 395.0 L343.5 395.0 L344.0 395.0 L344.5 395.0 L345.0 395.0 L345.5 395.0 L346.0 395.0 L346.5 395.0 L347.0 395.0 L347.5 395.0 L348.0 395.0 L348.5 395.0 L349.0 395.0 L349.5 395.0 L350.0 395.0 L350.5 395.0 L351.0 395.0 L351.5 395.0 L352.0 395.0 L352.5 395.0 L353.0 395.0 L353.5 395.0 L354.0 395.0 L354.5 395.0 L355.0 395.0 L355.5 395.0 L356.0 395.0 L356.5 395.0 L357.0 395.0 L357.5 395.0 L358.0 395.0 L358.5 395.0 L359.0 395.0 L359.5 395.1 L360.0 395.1 L360.5 395.1 L361.0 395.1 L361.5 395.1 L362.0 395.1 L362.5 395.1 L363.0 395.1 L363.5 395.1 L364.0 395.1 L364.5 395.1 L365.0 395.1 L365.5 395.1 L366.0 395.1 L366.5 395.1 L367.0 395.1 L367.5 395.1 L368.0 395.1 L368.5 395.1 L369.0 395.1 L369.5 395.1 L370.0 395.1 L370.5 395.1 L371.0 395.1 L371.5 395.1 L372.0 395.1 L372.5 395.1 L373.0 395.1 L373.5 395.1 L374.0 395.1 L374.5 395.1 L375.0 395.1 L375.5 395.1 L376.0 395.1 L376.5 395.1 L377.0 395.1 L377.5 395.1 L378.0 395.2 L378.5 395.2 L379.0 395.2 L379.5 395.2 L380.0 395.2 L380.5 395.2 L381.0 395.2 L381.5 395.2 L382.0 395.2 L382.5 395.2 L383.0 395.2 L383.5 395.2 L384.0 395.2 L384.5 395.2 L385.0 395.2 L385.5 395.2 L386.0 395.2 L386.5 395.2 L387.0 395.2 L387.5 395.2 L388.0 395.2 L388.5 395.2 L389.0 395.2 L389.5 395.2 L390.0 395.2 L390.5 395.2 L391.0 395.2 L391.5 395.2 L392.0 395.2 L392.5 395.2 L393.0 395.2 L393.5 395.2 L394.0 395.2 L394.5 395.2 L395.0 395.2 L395.5 395.2 L396.0 395.3 L396.5 395.3 L397.0 395.3 L397.5 395.3 L398.0 395.3 L398.5 395.3 L399.0 395.3 L399.5 395.3 L400.0 395.3 L400.5 395.3 L401.0 395.3 L401.5 395.3 L402.0 395.3 L402.5 395.3 L403.0 395.3 L403.5 395.3 L404.0 395.3 L404.5 395.3 L405.0 395.3 L405.5 395.3 L406.0 395.3 L406.5 395.3 L407.0 395.3 L407.5 395.3 L408.0 395.3 L408.5 395.3 L409.0 395.3 L409.5 395.3 L410.0 395.3 L410.5 395.3 L411.0 395.3 L411.5 395.3 L412.0 395.3 L412.5 395.3 L413.0 395.3 L413.5 395.4 L414.0 395.4 L414.5 395.4 L415.0 395.4 L415.5 395.4 L416.0 395.4 L416.5 395.4 L417.0 395.4 L417.5 395.4 L418.0 395.4 L418.5 395.4 L419.0 395.4 L419.5 395.4 L420.0 395.4 L420.5 395.4 L421.0 395.4 L421.5 395.4 L422.0 395.4 L422.5 395.4 L423.0 395.4 L423.5 395.4 L424.0 395.4 L424.5 395.4 L425.0 395.4 L425.5 395.4 L426.0 395.4 L426.5 395.4 L427.0 395.4 L427.5 395.4 L428.0 395.4 L428.5 395.4 L429.0 395.4 L429.5 395.4 L430.0 395.4 L430.5 395.4 L431.0 395.4 L431.5 395.4 L432.0 395.5 L432.5 395.5 L433.0 395.5 L433.5 395.5 L434.0 395.5 L434.5 395.5 L435.0 395.5 L435.5 395.5 L436.0 395.5 L436.5 395.5 L437.0 395.5 L437.5 395.5 L438.0 395.5 L438.5 395.5 L439.0 395.5 L439.5 395.5 L440.0 395.5 L440.5 395.5 L441.0 395.5 L441.5 395.5 L442.0 395.5 L442.5 395.5 L443.0 395.5 L443.5 395.5 L444.0 395.5 L444.5 395.5 L445.0 395.5 L445.5 395.5 L446.0 395.5 L446.5 395.5 L447.0 395.5 L447.5 395.5 L448.0 395.5 L448.5 395.5 L449.0 395.5 L449.5 395.5 L450.0 395.5 L450.5 395.5 L451.0 395.5 L451.5 395.5 L452.0 395.4 L452.5 395.4 L453.0 395.4 L453.5 395.4 L454.0 395.4 L454.5 395.4 L455.0 395.4 L455.5 395.4 L456.0 395.4 L456.5 395.4 L457.0 395.4 L457.5 395.4 L458.0 395.4 L458.5 395.4 L459.0 395.4 L459.5 395.4 L460.0 395.4 L460.5 395.3 L461.0 395.3 L461.5 395.3 L462.0 395.3 L462.5 395.3 L463.0 395.3 L463.5 395.3 L464.0 395.3 L464.5 395.3 L465.0 395.3 L465.5 395.3 L466.0 395.3 L466.5 395.2 L467.0 395.2 L467.5 395.2 L468.0 395.2 L468.5 395.2 L469.0 395.2 L469.5 395.2 L470.0 395.2 L470.5 395.2 L471.0 395.1 L471.5 395.1 L472.0 395.1 L472.5 395.1 L473.0 395.1 L473.5 395.1 L474.0 395.1 L474.5 395.1 L475.0 395.0 L475.5 395.0 L476.0 395.0 L476.5 395.0 L477.0 395.0 L477.5 395.0 L478.0 395.0 L478.5 394.9 L479.0 394.9 L479.5 394.9 L480.0 394.9 L480.5 394.9 L481.0 394.9 L481.5 394.9 L482.0 394.8 L482.5 394.8 L483.0 394.8 L483.5 394.8 L484.0 394.8 L484.5 394.8 L485.0 394.7 L485.5 394.7 L486.0 394.7 L486.5 394.7 L487.0 394.7 L487.5 394.7 L488.0 394.6 L488.5 394.6 L489.0 394.6 L489.5 394.6 L490.0 394.6 L490.5 394.5 L491.0 394.5 L491.5 394.5 L492.0 394.5 L492.5 394.5 L493.0 394.4 L493.5 394.4 L494.0 394.4 L494.5 394.4 L495.0 394.4 L495.5 394.3 L496.0 394.3 L496.5 394.3 L497.0 394.3 L497.5 394.3 L498.0 394.2 L498.5 394.2 L499.0 394.2 L499.5 394.2 L500.0 394.1 L500.5 394.1 L501.0 394.1 L501.5 394.1 L502.0 394.0 L502.5 394.0 L503.0 394.0 L503.5 394.0 L504.0 394.0 L504.5 393.9 L505.0 393.9 L505.5 393.9 L506.0 393.9 L506.5 393.8 L507.0 393.8 L507.5 393.8 L508.0 393.8 L508.5 393.7 L509.0 393.7 L509.5 393.7 L510.0 393.6 L510.5 393.6 L511.0 393.6 L511.5 393.6 L512.0 393.5 L512.5 393.5 L513.0 393.5 L513.5 393.5 L514.0 393.4 L514.5 393.4 L515.0 393.4 L515.5 393.3 L516.0 393.3 L516.5 393.3 L517.0 393.3 L517.5 393.2 L518.0 393.2 L518.5 393.2 L519.0 393.1 L519.5 393.1 L520.0 393.1 L520.5 393.0 L521.0 393.0 L521.5 393.0 L522.0 392.9 L522.5 392.9 L523.0 392.9 L523.5 392.9 L524.0 392.8 L524.5 392.8 L525.0 392.8 L525.5 392.7 L526.0 392.7 L526.5 392.7 L527.0 392.6 L527.5 392.6 L528.0 392.6 L528.5 392.5 L529.0 392.5 L529.5 392.5 L530.0 392.4 L530.5 392.4 L531.0 392.4 L531.5 392.3 L532.0 392.3 L532.5 392.2 L533.0 392.2 L533.5 392.2 L534.0 392.1 L534.5 392.1 L535.0 392.1 L535.5 392.0 L536.0 392.0 L536.5 392.0 L537.0 391.9 L537.5 391.9 L538.0 391.8 L538.5 391.8 L539.0 391.8 L539.5 391.7 L540.0 391.7 L540.5 391.7 L541.0 391.6 L541.5 391.6 L542.0 391.5 L542.5 391.5 L543.0 391.5 L543.5 391.4 L544.0 391.4 L544.5 391.3 L545.0 391.3 L545.5 391.3 L546.0 391.2 L546.5 391.2 L547.0 391.1 L547.5 391.1 L548.0 391.1 L548.5 391.0 L549.0 391.0 L549.5 390.9 L550.0 390.9 L550.5 390.9 L551.0 390.8 L551.5 390.8 L552.0 390.7 L552.5 390.7 L553.0 390.6 L553.5 390.6 L554.0 390.6 L554.5 390.5 L555.0 390.5 L555.5 390.4 L556.0 390.4 L556.5 390.3 L557.0 390.3 L557.5 390.2 L558.0 390.2 L558.5 390.2 L559.0 390.1 L559.5 390.1 L560.0 390.0 L560.5 390.0 L561.0 389.9 L561.5 389.9 L562.0 389.8 L562.5 389.8 L563.0 389.7 L563.5 389.7 L564.0 389.6 L564.5 389.6 L565.0 389.5 L565.5 389.5 L566.0 389.5 L566.5 389.4 L567.0 389.4 L567.5 389.3 L568.0 389.3 L568.5 389.2 L569.0 389.2 L569.5 389.1 L570.0 389.1 L570.5 389.0 L571.0 389.0 L571.5 388.9 L572.0 388.9 L572.5 388.8 L573.0 388.8 L573.5 388.7 L574.0 388.7 L574.5 388.6 L575.0 388.6 L575.5 388.5 L576.0 388.4 L576.5 388.4 L577.0 388.3 L577.5 388.3 L578.0 388.2 L578.5 388.2 L579.0 388.1 L579.5 388.1 L580.0 388.0 L580.5 388.0 L581.0 387.9 L581.5 387.9 L582.0 387.8 L582.5 387.8 L583.0 387.7 L583.5 387.6 L584.0 387.6 L584.5 387.5 L585.0 387.5 L585.5 387.4 L586.0 387.4 L586.5 387.3 L587.0 387.3 L587.5 387.2 L588.0 387.1 L588.5 387.1 L589.0 387.0 L589.5 387.0 L590.0 386.9 L590.5 386.9 L591.0 386.8 L591.5 386.7 L592.0 386.7 L592.5 386.6 L593.0 386.6 L593.5 386.5 L594.0 386.5 L594.5 386.4 L595.0 386.3 L595.5 386.3 L596.0 386.2 L596.5 386.2 L597.0 386.1 L597.5 386.0 L598.0 386.0 L598.5 385.9 L599.0 385.9 L599.5 385.8 L600.0 385.7 L600.5 385.7 L601.0 385.6 L601.5 385.5 L602.0 385.5 L602.5 385.4 L603.0 385.4 L603.5 385.3 L604.0 385.2 L604.5 385.2 L605.0 385.1 L605.5 385.0 L606.0 385.0 L606.5 384.9 L607.0 384.9 L607.5 384.8 L608.0 384.7 L608.5 384.7 L609.0 384.6 L609.5 384.5 L610.0 384.5 L610.5 384.4 L611.0 384.3 L611.5 384.3 L612.0 384.2 L612.5 384.1 L613.0 384.1 L613.5 384.0 L614.0 383.9 L614.5 383.9 L615.0 383.8 L615.5 383.7 L616.0 383.7 L616.5 383.6 L617.0 383.5 L617.5 383.5 L618.0 383.4 L618.5 383.3 L619.0 383.3 L619.5 383.2 L620.0 383.1 L620.5 383.1 L621.0 383.0 L621.5 382.9 L622.0 382.9 L622.5 382.8 L623.0 382.7 L623.5 382.6 L624.0 382.6 L624.5 382.5 L625.0 382.4 L625.5 382.4 L626.0 382.3 L626.5 382.2 L627.0 382.1 L627.5 382.1 L628.0 382.0 L628.5 381.9 L629.0 381.9 L629.5 381.8 L630.0 381.7 L630.5 381.6 L631.0 381.6 L631.5 381.5" stroke="#3c50a8"/>
</g>
<g shape-rendering="crispEdges"><path d="M136 74h4v1h-4z M136 83h4v1h-4z M133 77h1v4h-1z M142 77h1v4h-1z M135 75h1v1h-1z M140 75h1v1h-1z M134 76h1v1h-1z M141 76h1v1h-1z M134 81h1v1h-1z M141 81h1v1h-1z M135 82h1v1h-1z M140 82h1v1h-1z" fill="#eb1e28"/>
<path d="M172 127h4v1h-4z M172 136h4v1h-4z M169 130h1v4h-1z M178 130h1v4h-1z M171 128h1v1h-1z M176 128h1v1h-1z M170 129h1v1h-1z M177 129h1v1h-1z M170 134h1v1h-1z M177 134h1v1h-1z M171 135h1v1h-1z M176 135h1v1h-1z" fill="#eb1e28"/>
<path d="M204 153h4v1h-4z M204 162h4v1h-4z M201 156h1v4h-1z M210 156h1v4h-1z M203 154h1v1h-1z M208 154h1v1h-1z M202 155h1v1h-1z M209 155h1v1h-1z M202 160h1v1h-1z M209 160h1v1h-1z M203 161h1v1h-1z M208 161h1v1h-1z" fill="#eb1e28"/>
<path d="M241 147h4v1h-4z M241 156h4v1h-4z M238 150h1v4h-1z M247 150h1v4h-1z M240 148h1v1h-1z M245 148h1v1h-1z M239 149h1v1h-1z M246 149h1v1h-1z M239 154h1v1h-1z M246 154h1v1h-1z M240 155h1v1h-1z M245 155h1v1h-1z" fill="#eb1e28"/>
<path d="M233 212h4v1h-4z M233 221h4v1h-4z M230 215h1v4h-1z M239 215h1v4h-1z M232 213h1v1h-1z M237 213h1v1h-1z M231 214h1v1h-1z M238 214h1v1h-1z M231 219h1v1h-1z M238 219h1v1h-1z M232 220h1v1h-1z M237 220h1v1h-1z" fill="#eb1e28"/>
<path d="M305 214h4v1h-4z M305 223h4v1h-4z M302 217h1v4h-1z M311 217h1v4h-1z M304 215h1v1h-1z M309 215h1v1h-1z M303 216h1v1h-1z M310 216h1v1h-1z M303 221h1v1h-1z M310 221h1v1h-1z M304 222h1v1h-1z M309 222h1v1h-1z" fill="#eb1e28"/>
<path d="M316 263h4v1h-4z M316 272h4v1h-4z M313 266h1v4h-1z M322 266h1v4h-1z M315 264h1v1h-1z M320 264h1v1h-1z M314 265h1v1h-1z M321 265h1v1h-1z M314 270h1v1h-1z M321 270h1v1h-1z M315 271h1v1h-1z M320 271h1v1h-1z" fill="#eb1e28"/>
<path d="M157 382h4v1h-4z M157 391h4v1h-4z M154 385h1v4h-1z M163 385h1v4h-1z M156 383h1v1h-1z M161 383h1v1h-1z M155 384h1v1h-1z M162 384h1v1h-1z M155 389h1v1h-1z M162 389h1v1h-1z M156 390h1v1h-1z M161 390h1v1h-1z" fill="#eb1e28"/>
<path d="M221 390h4v1h-4z M221 399h4v1h-4z M218 393h1v4h-1z M227 393h1v4h-1z M220 391h1v1h-1z M225 391h1v1h-1z M219 392h1v1h-1z M226 392h1v1h-1z M219 397h1v1h-1z M226 397h1v1h-1z M220 398h1v1h-1z M225 398h1v1h-1z" fill="#eb1e28"/>
<path d="M285 389h4v1h-4z M285 398h4v1h-4z M282 392h1v4h-1z M291 392h1v4h-1z M284 390h1v1h-1z M289 390h1v1h-1z M283 391h1v1h-1z M290 391h1v1h-1z M283 396h1v1h-1z M290 396h1v1h-1z M284 397h1v1h-1z M289 397h1v1h-1z" fill="#eb1e28"/>
<path d="M340 389h4v1h-4z M340 398h4v1h-4z M337 392h1v4h-1z M346 392h1v4h-1z M339 390h1v1h-1z M344 390h1v1h-1z M338 391h1v1h-1z M345 391h1v1h-1z M338 396h1v1h-1z M345 396h1v1h-1z M339 397h1v1h-1z M344 397h1v1h-1z" fill="#eb1e28"/>
<path d="M462 388h4v1h-4z M462 397h4v1h-4z M459 391h1v4h-1z M468 391h1v4h-1z M461 389h1v1h-1z M466 389h1v1h-1z M460 390h1v1h-1z M467 390h1v1h-1z M460 395h1v1h-1z M467 395h1v1h-1z M461 396h1v1h-1z M466 396h1v1h-1z" fill="#eb1e28"/></g>
</svg>
<svg width="0" height="0" style="position:absolute"><filter id="crisp" x="0" y="0" width="100%" height="100%"><feComponentTransfer><feFuncA type="discrete" tableValues="0 1"/></feComponentTransfer></filter></svg>
<!-- text -->
<div style="position:absolute;left:0;top:0;width:640px;height:480px;filter:url(#crisp);">
<div class="t" style="left:228.83px;top:2px;transform:scaleX(0.968);color:#fff;">PeakSimple for Windows</div>
<div class="t" style="left:7.42px;top:20px;transform:scaleX(0.978);"><span class="u">F</span>ile</div>
<div class="t" style="left:47.62px;top:20px;transform:scaleX(0.98);"><span class="u">E</span>dit</div>
<div class="t" style="left:89.2px;top:20px;transform:scaleX(0.903);"><span class="u">V</span>iew</div>
<div class="t" style="left:134.37px;top:20px;transform:scaleX(0.927);"><span class="u">A</span>cquisition</div>
<div class="t" style="left:221.61px;top:20px;transform:scaleX(0.988);"><span class="u">H</span>elp</div>
<div class="t" style="left:27.84px;top:47px;transform:scaleX(0.96);">2-step extract</div>
<div class="t" style="left:124.06px;top:47px;transform:scaleX(0.943);">BUCK 910-GC</div>
<div class="t" style="left:124.02px;top:63px;transform:scaleX(0.976);">602.CHR/DEFAULT.CON</div>
<div class="t" style="left:464.99px;top:48px;transform:scaleX(1.009);">8.33 min</div>
<div class="t" style="left:63.68px;top:71px;transform:scaleX(1.022);">218.750</div>
<div class="t" style="left:67.28px;top:426px;transform:scaleX(1.017);">-21.875</div>
<div class="t" style="left:120.0px;top:465px;transform:scaleX(1.0);">0.000</div>
<div class="t" style="left:587.98px;top:465px;transform:scaleX(1.024);">16.000</div>
</div>
</body></html>
